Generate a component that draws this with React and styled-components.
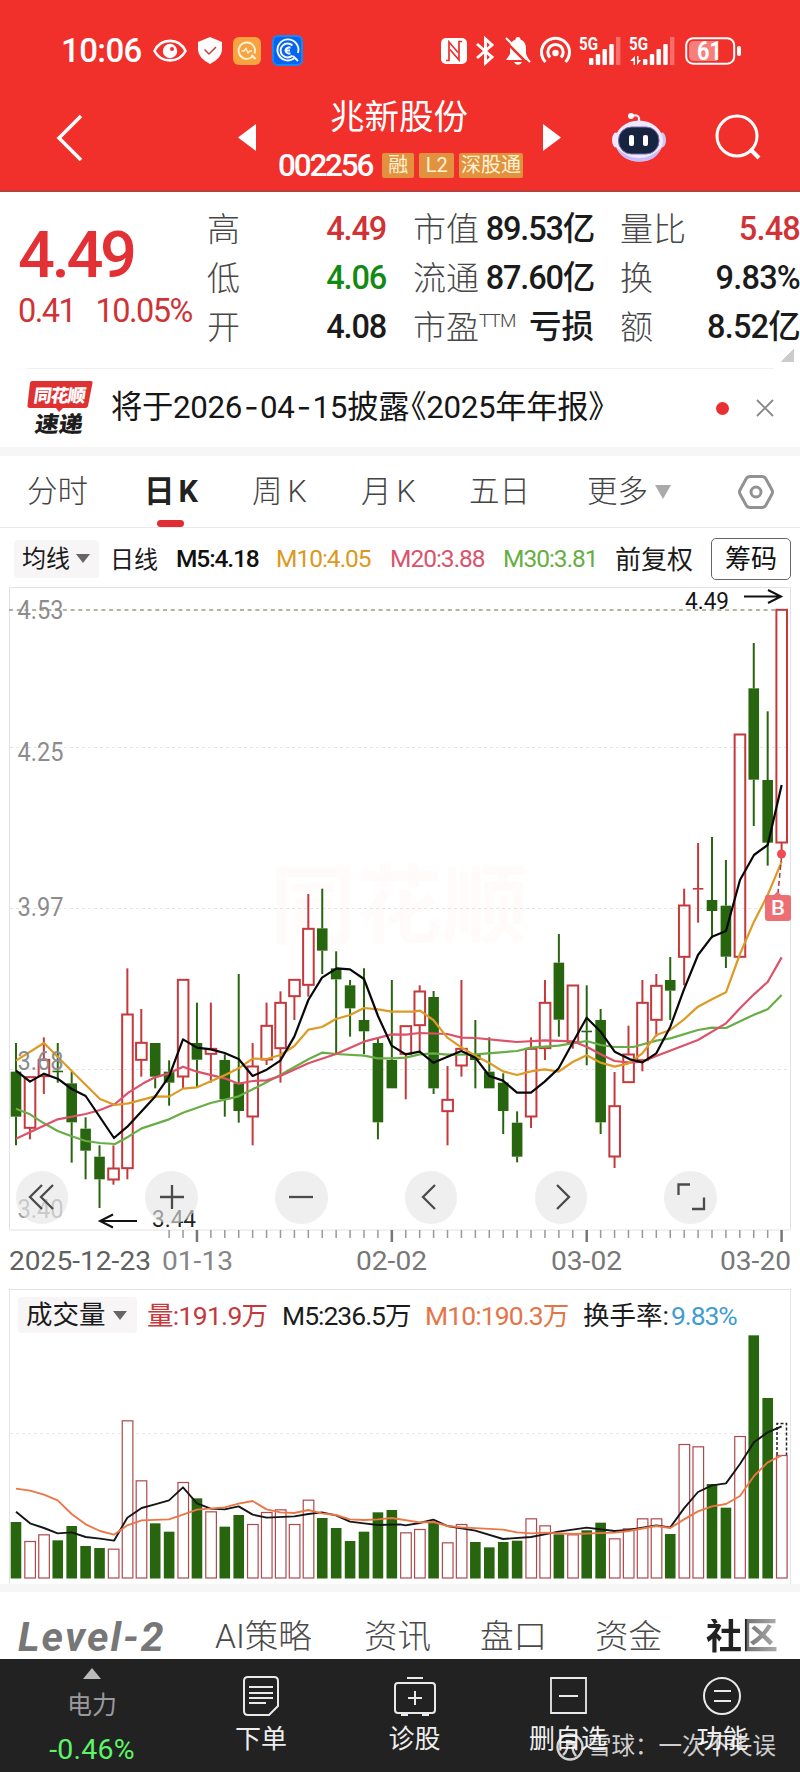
import React from "react";
import styled, { createGlobalStyle } from "styled-components";

const GlobalStyle = createGlobalStyle`
  *, *::before, *::after { box-sizing: border-box; }
  body { margin: 0; background: #fff; }
`;

const FONT = `Roboto, "Noto Sans CJK SC", sans-serif`;

const Screen = styled.div`
  width: 800px;
  height: 1772px;
  display: flex;
  flex-direction: column;
  overflow: hidden;
  background: #fff;
  color: #1b1b1b;
  font-family: ${FONT};
`;

const Text = styled.span`
  display: inline-block;
  white-space: nowrap;
  font-size: ${(p) => p.$size || 26}px;
  font-weight: ${(p) => p.$weight || 400};
  letter-spacing: ${(p) => p.$ls || 0}px;
  color: ${(p) => p.$color || "inherit"};
  margin: ${(p) => p.$mt || 0}px 0 0 ${(p) => p.$ml || 0}px;
  line-height: 1;
`;

const Icon = styled.svg`
  display: block;
  flex: none;
  overflow: visible;
`;

/* ---------- header ---------- */

const Header = styled.header`
  height: 192px;
  flex: none;
  background: #f1302b;
  border-bottom: 2px solid #b9403f;
  color: #fff;
`;

const StatusBar = styled.div`
  height: 85px;
  padding: 16px 59px 0 61px;
  display: flex;
  align-items: center;
  justify-content: space-between;
`;

const StatusGroup = styled.div`
  display: flex;
  align-items: center;
  gap: ${(p) => p.$gap}px;
`;

const NavBar = styled.div`
  height: 105px;
  display: grid;
  grid-template-columns: 238px 40px 245px 20px 69px 54px 50px 44px;
  align-items: center;
`;

const NavCell = styled.div`
  padding-left: ${(p) => p.$indent || 0}px;
`;

const StockTitle = styled.div`
  display: flex;
  flex-direction: column;
  gap: 8px;
  padding-top: 6px;
`;

const StockName = styled.div`
  height: 41px;
  display: flex;
  align-items: center;
  padding: 0 0 4px 52px;
`;

const StockCode = styled.div`
  height: 34px;
  display: flex;
  align-items: center;
`;

const Badge = styled.span`
  height: 25px;
  width: ${(p) => p.$w}px;
  margin-left: ${(p) => p.$ml || 5}px;
  border-radius: 2px;
  background: #e2923f;
  color: #fff3d6;
  display: flex;
  align-items: center;
  justify-content: center;
  font-size: 20px;
  line-height: 1;
  white-space: nowrap;
  overflow: hidden;
`;

/* ---------- quote ---------- */

const Quote = styled.section`
  height: 176px;
  flex: none;
  display: grid;
  grid-template-columns: 207px 179px 27px 181px 26px 180px;
`;

const PriceBlock = styled.div`
  padding: 34px 0 0 18px;
  color: #e33034;
`;

const Price = styled.div`
  height: 58px;
  display: flex;
  align-items: center;
`;

const Change = styled.div`
  height: 55px;
  display: flex;
  align-items: center;
  gap: 20px;
  color: #cf3336;
`;

const StatColumn = styled.div`
  padding-top: 13px;
  display: flex;
  flex-direction: column;
  grid-column: ${(p) => p.$col};
`;

const StatRow = styled.div`
  height: 49px;
  display: flex;
  align-items: center;
  justify-content: space-between;
`;

const Label = styled.span`
  font-size: 33px;
  line-height: 1;
  color: #484848;
  font-weight: 300;
  white-space: nowrap;
  display: flex;
`;

const Sup = styled.span`
  font-size: 19px;
  line-height: 19px;
  letter-spacing: -0.9px;
`;

const Corner = styled.div`
  grid-column: 6;
  justify-self: end;
  width: 13px;
  height: 13px;
  margin: -10px 6px 0 0;
  background: linear-gradient(135deg, transparent 50%, #ccc 50%);
`;

/* ---------- news ---------- */

const News = styled.section`
  height: 79px;
  flex: none;
  margin: 0 26px 0 27px;
  border-top: 1px solid #eee;
  display: flex;
  align-items: center;
`;

const Headline = styled.div`
  flex: 1;
  padding-left: 18px;
  color: #161616;
`;

const Dash = styled.span`
  font-family: Inter, sans-serif;
  letter-spacing: 1.5px;
  margin-left: 2px;
`;

const OpenQuote = styled.span`
  margin-left: -14px;
`;

const Dot = styled.span`
  width: 13px;
  height: 13px;
  border-radius: 50%;
  background: #e7302f;
  margin-right: 27px;
`;

const Band = styled.div`
  height: ${(p) => p.$h}px;
  flex: none;
  background: #f6f6f7;
`;

/* ---------- period tabs ---------- */

const Periods = styled.nav`
  height: 72px;
  flex: none;
  padding-left: 27px;
  display: grid;
  grid-template-columns: 117px 108px 109px 108px 118px 151px 36px;
  border-bottom: 1px solid #e9e9e9;
`;

const Period = styled.div`
  display: flex;
  align-items: center;
  padding-top: 1px;
  font-size: 30.5px;
  line-height: 1;
  font-weight: ${(p) => (p.$active ? 700 : 300)};
  color: ${(p) => (p.$active ? "#222" : "#444")};
  white-space: nowrap;
  gap: ${(p) => p.$gap || 0}px;
`;

const ActiveLabel = styled.span`
  align-self: stretch;
  display: flex;
  align-items: center;
  gap: 4px;
  position: relative;

  &::after {
    content: "";
    position: absolute;
    left: 13px;
    bottom: 0;
    width: 27px;
    height: 7px;
    border-radius: 4px;
    background: #e02d34;
  }
`;

const Triangle = styled.span`
  width: 0;
  height: 0;
  border: ${(p) => p.$w / 2}px solid transparent;
  border-top: ${(p) => p.$h}px solid ${(p) => p.$c || "#666"};
  border-bottom: 0;
  margin-left: ${(p) => p.$ml}px;
`;

/* ---------- indicator rows ---------- */

const IndicatorRow = styled.div`
  height: 59px;
  flex: none;
  padding: 2px 9px 0 14px;
  display: flex;
  align-items: center;
`;

const Picker = styled.div`
  width: ${(p) => p.$w}px;
  height: ${(p) => p.$h}px;
  padding-left: 8px;
  border-radius: 4px;
  background: #f7f5f6;
  display: flex;
  align-items: center;
  flex: none;
`;

const Reading = styled.div`
  width: ${(p) => p.$w}px;
  flex: none;
  display: flex;
  align-items: center;
  padding-top: 2px;
`;

const ChipsButton = styled.div`
  width: 80px;
  height: 42px;
  border: 1px solid #666;
  border-radius: 5px;
  display: flex;
  align-items: center;
  justify-content: center;
  color: #111;
`;

/* ---------- charts ---------- */

const PriceChart = styled.section`
  height: 702px;
  flex: none;
  position: relative;
`;

const Controls = styled.div`
  position: absolute;
  left: 15.5px;
  top: 584px;
  display: flex;
  gap: 77.3px;
`;

const RoundButton = styled.div`
  width: 52.5px;
  height: 52.5px;
  border-radius: 50%;
  background: rgba(229, 229, 229, 0.62);
  display: flex;
  align-items: center;
  justify-content: center;
`;

const VolumePanel = styled.section`
  height: 295px;
  flex: none;
  margin: 0 9px;
  border: 1px solid #e4e4e4;
  border-bottom: 0;
`;

const VolumeHead = styled.div`
  height: 50px;
  padding: 0 0 0 8px;
  display: flex;
  align-items: center;
`;

/* ---------- bottom ---------- */

const Sections = styled.nav`
  height: 67px;
  flex: none;
  padding: 23px 0 0 18px;
  display: grid;
  grid-template-columns: 197px 149px 116px 115px 111px 80px;
  align-items: center;
  color: #4a4a4a;
  font-size: 33.5px;
  line-height: 1;
  font-weight: 300;
  white-space: nowrap;
`;

const Level = styled.span`
  font-size: 41px;
  font-weight: 700;
  font-style: italic;
  line-height: 33px;
  letter-spacing: 2.1px;
  color: #777;
`;

const Fading = styled.span`
  font-size: 36px;
  font-weight: 700;
  color: transparent;
  background: linear-gradient(90deg, #222 0 50%, #777 52%, #bbb 100%);
  background-clip: text;
`;

const ActionBar = styled.footer`
  flex: 1;
  position: relative;
  background: #222;
  color: #eee;
  display: grid;
  grid-template-columns: 184px 154px 153px 154px 155px;
`;

const Action = styled.div`
  display: flex;
  flex-direction: column;
  align-items: center;
  padding-top: 17px;
  gap: 10px;
`;

const Sector = styled.div`
  display: flex;
  flex-direction: column;
  align-items: center;
  padding-top: 9px;
`;

const UpMark = styled.span`
  border: 9.5px solid transparent;
  border-bottom: 11px solid #bbb;
  border-top: 0;
  margin-bottom: 14px;
`;

const Watermark = styled.div`
  position: absolute;
  left: 556px;
  top: 74px;
  display: flex;
  align-items: center;
  gap: 4px;
  color: rgba(255, 255, 255, 0.78);
`;

/* ---------- chart data ---------- */

// [rising, high, body top, body bottom, low] in thirds of a pixel
const CANDLES = [
  [0, 549, 635, 770, 856], [1, 650, 650, 805, 838], [1, 532, 598, 650, 702], [0, 549, 632, 636, 668],
  [0, 636, 670, 787, 908], [0, 772, 806, 872, 958], [0, 856, 890, 958, 1044], [1, 856, 924, 960, 974],
  [1, 325, 462, 926, 958], [1, 447, 547, 601, 650], [0, 549, 549, 650, 685], [0, 601, 635, 668, 737],
  [1, 358, 358, 651, 685], [0, 428, 549, 599, 683], [1, 428, 565, 583, 668], [0, 583, 600, 718, 770],
  [0, 342, 670, 753, 788], [1, 549, 618, 771, 856], [1, 428, 496, 600, 615], [1, 394, 427, 566, 668],
  [1, 358, 358, 410, 480], [1, 102, 205, 376, 410], [0, 86, 205, 272, 342], [0, 274, 325, 358, 580],
  [0, 360, 376, 445, 530], [0, 325, 480, 514, 583], [0, 534, 549, 787, 838], [0, 360, 600, 685, 685],
  [1, 497, 497, 583, 718], [1, 376, 393, 497, 575], [0, 393, 411, 685, 702], [1, 618, 718, 755, 856],
  [1, 360, 565, 618, 650], [0, 480, 585, 600, 685], [0, 532, 635, 685, 685], [0, 640, 668, 753, 822],
  [0, 754, 788, 890, 907], [1, 532, 565, 771, 804], [1, 360, 427, 566, 600], [0, 222, 308, 479, 530],
  [1, 375, 375, 548, 566], [0, 376, 512, 516, 616], [0, 447, 480, 787, 822], [1, 636, 737, 891, 924],
  [1, 497, 582, 668, 668], [1, 360, 427, 602, 634], [1, 342, 376, 481, 530], [0, 291, 360, 392, 480],
  [1, 86, 135, 292, 376], [1, -51, 84, 88, 188], [0, -69, 120, 153, 235], [0, 0, 137, 290, 324],
  [1, -378, -378, 292, 292], [0, -651, -515, -241, -102], [0, -446, -240, -52, 17], [1, -752, -752, -51, -20],
];

const VOLUMES = [
  726, 783, 763, 781, 738, 798, 804, 806, 421, 601, 730, 755, 606, 655, 694, 740, 705, 732, 696, 688, 732, 659,
  714, 744, 783, 755, 697, 690, 757, 747, 727, 787, 732, 786, 802, 786, 782, 715, 736, 763, 763, 751, 728, 775,
  745, 715, 715, 762, 492, 499, 612, 683, 468, 166, 354, 525,
];

const MA = {
  m5: "48,632 90,665 132,641 173,656 215,687 257,708 342,834 382,800 465,710 507,650 549,538 591,563 632,568 674,579 716,597 758,648 800,629 841,602 883,530 925,420 966,353 1010,325 1050,328 1092,357 1134,468 1175,557 1217,583 1259,575 1300,608 1384,573 1426,593 1468,648 1509,662 1551,698 1593,698 1634,665 1676,625 1718,548 1760,473 1802,515 1844,575 1890,598 1927,607 1969,580 2011,500 2052,388 2094,285 2136,230 2178,213 2220,60 2262,-15 2303,-45 2345,-225",
  m10: "48,602 132,549 215,633 300,717 345,735 385,730 465,709 507,710 549,686 591,682 674,646 716,625 758,596 800,597 841,585 883,558 925,509 966,501 1008,477 1050,465 1092,444 1134,448 1175,455 1240,455 1260,452 1300,480 1342,533 1384,562 1426,587 1468,609 1509,634 1551,645 1593,634 1634,628 1676,635 1718,606 1760,586 1802,608 1844,620 1886,610 1927,580 1969,525 2011,510 2052,478 2094,440 2136,418 2178,397 2220,282 2262,185 2303,105 2345,5",
  m20: "48,836 173,778 257,762 300,750 345,732 385,698 430,670 465,652 507,640 549,620 591,635 674,655 716,671 758,663 800,661 841,648 925,610 1008,582 1092,545 1175,523 1217,524 1259,519 1342,522 1384,533 1426,534 1551,546 1634,541 1718,544 1760,560 1802,583 1844,603 1890,608 1927,605 1969,588 2094,540 2178,490 2220,445 2262,403 2303,366 2345,292",
  m30: "48,746 90,763 132,790 173,813 215,829 257,843 300,849 345,852 385,830 425,805 507,778 549,758 632,729 716,709 758,688 841,645 925,598 966,578 1008,582 1092,587 1134,595 1175,595 1217,593 1259,583 1300,580 1342,584 1426,583 1551,573 1593,563 1676,557 1760,543 1802,555 1844,561 1900,561 1969,542 2011,535 2094,510 2136,503 2178,504 2262,464 2303,448 2345,405",
};

const VOLUME_MA = {
  m5: "48,695 90,730 132,744 173,760 215,757 257,771 300,776 342,782 382,713 425,684 465,673 507,661 549,622 591,670 632,686 674,688 716,679 758,704 800,713 883,709 925,702 966,697 1008,706 1050,725 1092,730 1134,735 1200,733 1217,736 1259,729 1300,719 1342,738 1426,752 1509,777 1593,771 1634,763 1676,755 1760,743 1844,753 1886,750 1969,736 2011,742 2052,685 2094,636 2136,616 2178,610 2220,552 2262,487 2303,457 2345,439",
  m10: "48,626 90,632 132,644 173,661 215,702 257,733 300,753 342,764 382,736 425,721 507,718 549,704 591,689 674,682 716,671 758,663 800,688 841,697 883,699 925,690 966,700 1008,705 1050,718 1092,720 1134,718 1175,714 1259,727 1300,726 1342,738 1384,742 1509,749 1551,757 1593,760 1634,758 1718,762 1844,758 1886,753 1969,738 2011,744 2052,718 2094,694 2136,679 2178,672 2220,648 2262,588 2303,547 2345,526",
};

const RED = "#c5393c";
const GREEN = "#28650f";
const candleX = (i) => 16 + i * 13.92;

function Line({ points, color, width = 2.2 }) {
  return <polyline points={points} fill="none" stroke={color} strokeWidth={width * 3} strokeLinejoin="round" />;
}

function Candles() {
  return CANDLES.map(([up, high, top, bottom, low], i) => {
    const x = candleX(i);
    const y = (v) => 273 + v / 3;
    const color = up ? RED : GREEN;
    return (
      <g key={i} stroke={color} strokeWidth="2">
        {high < top && <line x1={x} x2={x} y1={y(high)} y2={y(top)} />}
        {low > bottom && <line x1={x} x2={x} y1={y(bottom)} y2={y(low)} />}
        {up && bottom - top > 6 ? (
          <rect x={x - 5.2} y={y(top) + 0.5} width="10.6" height={(bottom - top) / 3 - 1} fill="none" />
        ) : (
          <rect x={x - 5.3} y={y(top)} width="10.6" height={Math.max((bottom - top) / 3, 1.6)} fill={color} stroke="none" />
        )}
      </g>
    );
  });
}

function AxisText({ x, y, w, children, color = "#8c8c8c", size = 26, weight = 400 }) {
  return (
    <text x={x} y={y} textLength={w} lengthAdjust="spacingAndGlyphs" fill={color} fontSize={size} fontWeight={weight} fontFamily="Roboto, sans-serif">
      {children}
    </text>
  );
}

function PriceDrawing() {
  return (
    <Icon width="800" height="702" viewBox="0 0 800 702">
      <path d="M9.5 643V.5H790.5V643Z" fill="none" stroke="#e2e2e2" />
      <text x="270" y="350" fontSize="86" fontWeight="700" fill="#fffbfb" fontFamily='"Noto Sans CJK SC", sans-serif'>同花顺</text>
      {[160.5, 321.5, 482.5].map((y) => (
        <line key={y} x1="10" x2="790" y1={y} y2={y} stroke="#e4e4e4" strokeDasharray="3 3" />
      ))}
      <line x1="9" x2="776" y1="23" y2="23" stroke="#9a9c82" strokeWidth="1.4" strokeDasharray="4 3.7" />
      <Candles />
      <g transform="translate(0 273) scale(.33333)">
        <Line points={MA.m30} color="#68ad45" />
        <Line points={MA.m20} color="#dd5269" />
        <Line points={MA.m10} color="#dd9a25" />
        <Line points={MA.m5} color="#080808" />
      </g>
      <AxisText x="17.5" y="32" w="46">4.53</AxisText>
      <AxisText x="17.5" y="174" w="46">4.25</AxisText>
      <AxisText x="17.5" y="329" w="46">3.97</AxisText>
      <AxisText x="17.5" y="483" w="46">3.68</AxisText>
      <AxisText x="17.5" y="631" w="46" color="#9c9c9c">3.40</AxisText>
      <AxisText x="685" y="22" w="44" color="#151515" size="23">4.49</AxisText>
      <path d="M744 9.5H781M768 3L781 9.5L768 16" fill="none" stroke="#111" strokeWidth="2" />
      <AxisText x="152" y="640" w="44" color="#222" size="23">3.44</AxisText>
      <path d="M137 634H100M113 627.5L100 634L113 640.5" fill="none" stroke="#111" strokeWidth="2" />
      <path d="M781.5 270L778 306" stroke="#a43c3c" strokeWidth="1.5" strokeDasharray="5 3" />
      <circle cx="781.5" cy="267" r="4.5" fill="#ef4b50" />
      <path d="M767 308H774L777.5 304L781 308H788Q791 308 791 311V331Q791 334 788 334H768Q765 334 765 331V311Q765 308 767 308Z" fill="#ec6469" fillOpacity=".93" />
      <AxisText x="771" y="328" w="14" color="#fff" size="20" weight="500">B</AxisText>
      {CANDLES.map((_, i) => {
        const major = i === 13 || i === 27 || i === 41 || i === 55;
        if (i < 11) return null;
        return <line key={i} x1={candleX(i)} x2={candleX(i)} y1="643" y2={major ? 655 : 651} stroke={major ? "#777" : "#999"} strokeWidth={major ? 2.5 : 1.5} />;
      })}
      <AxisText x="9" y="683" w="142" color="#606060" size="25.5">2025-12-23</AxisText>
      <AxisText x="162" y="683" w="71" color="#858585" size="25.5">01-13</AxisText>
      <AxisText x="356" y="683" w="71" color="#777" size="25.5">02-02</AxisText>
      <AxisText x="551" y="683" w="71" color="#777" size="25.5">03-02</AxisText>
      <AxisText x="720" y="683" w="71" color="#777" size="25.5">03-20</AxisText>
    </Icon>
  );
}

function VolumeDrawing() {
  return (
    <Icon width="780" height="244" viewBox="10 60 780 244">
      <line x1="10" x2="790" y1="153.5" y2="153.5" stroke="#e8e8e8" strokeDasharray="3 3" />
      {VOLUMES.map((v, i) => {
        const x = candleX(i);
        const top = v / 3;
        return CANDLES[i][0] ? (
          <rect key={i} x={x - 5.1} y={top + 0.5} width="10.6" height={298 - top - 0.5} fill="#fff" stroke="#ae494d" strokeWidth="1.2" />
        ) : (
          <rect key={i} x={x - 5.3} y={top} width="10.6" height={298.5 - top} fill={GREEN} />
        );
      })}
      <path d="M777 175V143.5H786.5V175" fill="none" stroke="#222" strokeWidth="1.5" strokeDasharray="3 2" />
      <g transform="scale(.33333)">
        <Line points={VOLUME_MA.m5} color="#161616" width={1.9} />
        <Line points={VOLUME_MA.m10} color="#ec7746" width={1.9} />
      </g>
    </Icon>
  );
}

/* ---------- icons ---------- */

const Eye = () => (
  <Icon width="34" height="24" viewBox="0 0 34 24" fill="none" stroke="#fff" strokeWidth="2.6">
    <path d="M1.5 12C8-1.5 26-1.5 32.5 12C26 24.5 8 24.5 1.5 12Z" />
    <circle cx="17" cy="12" r="7.2" fill="#fff" stroke="none" />
    <circle cx="19" cy="10" r="2" fill="#ef302b" stroke="none" />
  </Icon>
);
const Shield = () => (
  <Icon width="24" height="27" viewBox="0 0 24 27">
    <path d="M12 0L24 5V13Q23.5 21 12 27Q.5 21 0 13V5Z" fill="#fff" />
    <path d="M6.5 12.5L11 17L18 10" fill="none" stroke="#c7413c" strokeWidth="1.5" />
  </Icon>
);
const OrangeApp = () => (
  <Icon width="28" height="28" viewBox="0 0 28 28">
    <rect width="28" height="28" rx="6" fill="#f7a33f" />
    <path d="M19 20A8.2 8.2 0 1 1 21.5 16.5M18.5 18L22.5 22" fill="none" stroke="#fff2d8" strokeWidth="1.9" />
    <path d="M8.5 14H11L13 11.5L15 16L17 14H19" fill="none" stroke="#fff2d8" strokeWidth="1.4" />
  </Icon>
);
const BlueApp = () => (
  <Icon width="31" height="31" viewBox="0 0 31 31">
    <rect width="31" height="31" rx="6" fill="#1687f5" />
    <rect x="2" y="2" width="27" height="27" rx="4" fill="#0764ee" />
    <path d="M22 23.5A10.5 10.5 0 1 1 26 18M21 21L26 26M20.5 10.5A7 7 0 1 0 20.5 20.5M18.5 12.5H16.5Q13.5 13.5 13.5 15.5T16.5 18.5H18.5M14 15.5H18" fill="none" stroke="#f3f8ff" strokeWidth="1.9" />
  </Icon>
);
const Nfc = () => (
  <Icon width="26" height="26" viewBox="0 0 26 26">
    <rect width="26" height="26" rx="5" fill="#fff" />
    <path d="M5 22.5H8V4L17 14.5" fill="none" stroke="#ec302b" strokeWidth="1.7" />
    <path d="M21 3.500H18V22L9 11.500" fill="none" stroke="#ec302b" strokeWidth="1.7" />
  </Icon>
);
const Bluetooth = () => (
  <Icon width="19" height="28" viewBox="0 0 19 28" fill="none" stroke="#fff" strokeWidth="2.9">
    <path d="M1 7L16 20L9.5 26V2L16 8L1 21" />
  </Icon>
);
const Bell = () => (
  <Icon width="27" height="28" viewBox="0 0 27 28">
    <path d="M14 0Q16.5 0 16.5 2.5Q22 4.5 22 12V17L25 23H2L6 17V11Q6 4.5 11.5 2.5Q11.5 0 14 0ZM10 25H18Q16.5 28 14 28T10 25Z" fill="#fff" />
    <path d="M0 3L24 27" stroke="#ef302b" strokeWidth="2.5" />
    <path d="M2 1L26 25" stroke="#fff" strokeWidth="2.2" />
  </Icon>
);
const Hotspot = () => (
  <Icon width="31" height="27" viewBox="0 0 31 27" fill="none" stroke="#fff" strokeWidth="3">
    <path d="M5.5 25A14 14 0 1 1 25.5 25M10 20.5A7.7 7.7 0 1 1 21 20.5" />
    <circle cx="15.5" cy="16" r="3.2" fill="#fff" stroke="none" />
  </Icon>
);
const Signal = ({ data }) => (
  <Icon width={data ? 46 : 41} height="28" viewBox={`0 0 ${data ? 46 : 41} 28`}>
    <text x="-1" y="13" fontFamily="Roboto, sans-serif" fontWeight="700" fontSize="18.5" fill="#fff" textLength="19" lengthAdjust="spacingAndGlyphs">5G</text>
    <g transform={`translate(${data ? 13 : 9} 0)`} fill="#fff">
      <rect y={data ? 22 : 21} width="4.4" height={data ? 6 : 7} rx="1" />
      <rect x="6.8" y="17" width="4.4" height="11" rx="1" />
      <rect x="13.5" y="12" width="4.4" height="16" rx="1" />
      <rect x="20.3" y="7" width="4.4" height="21" rx="1" />
      <rect x="27" width="4.4" height="28" fillOpacity=".3" />
    </g>
    {data && <path d="M0 24L5 19V28H3.5V24ZM11 23L7 28V19H8.5V23Z" fill="#fff" />}
  </Icon>
);
const Battery = () => (
  <Icon width="56" height="28" viewBox="0 0 56 28">
    <rect x="1.2" y="1.2" width="48" height="25.5" rx="7" fill="none" stroke="#fff" strokeWidth="2" />
    <path d="M9 4H32V24H9Q4 24 4 19V9Q4 4 9 4Z" fill="#fff" fillOpacity=".38" />
    <rect x="52" y="9" width="4" height="10" rx="2" fill="#fff" />
    <text x="12" y="23" fontFamily="Roboto, sans-serif" fontWeight="700" fontSize="25" textLength="25" lengthAdjust="spacingAndGlyphs" fill="#fff">61</text>
  </Icon>
);
const Robot = () => (
  <Icon width="54" height="50" viewBox="0 0 54 50">
    <path d="M27 9V5Q26 1 20 3" fill="none" stroke="#f6e9fa" strokeWidth="2.2" />
    <circle cx="19" cy="3" r="3" fill="#fff" />
    <ellipse cx="4" cy="27" rx="4" ry="7.5" fill="#f2e7ff" />
    <ellipse cx="50" cy="27" rx="4" ry="7.5" fill="#cfc4fb" />
    <ellipse cx="27" cy="28" rx="24" ry="20.5" fill="#eee9ff" />
    <path d="M5 35Q10 48 27 48.5T49 35Q39 45 27 45T5 35Z" fill="#c8bdf9" />
    <rect x="6.5" y="14" width="40.5" height="27" rx="13" fill="#17243f" stroke="#796dac" />
    <rect x="17" y="22" width="5" height="11" rx="2" fill="#fff" />
    <rect x="31" y="22" width="5" height="11" rx="2" fill="#fff" />
  </Icon>
);
const Express = () => (
  <Icon width="66" height="54" viewBox="0 0 66 54">
    <path d="M5 0H64Q66 0 65.5 2L61 25Q60.5 27 58 27H36L32 31L29 27H3Q0 27 .5 24L3 2Q3.5 0 5 0Z" fill="#df3032" />
    <g fontFamily='"Noto Sans CJK SC", sans-serif' fontWeight="900">
      <text transform="translate(6 21) skewX(-8)" fontSize="18" textLength="52" fill="#fff">同花顺</text>
      <text transform="translate(7 51) skewX(-8)" fontSize="22" textLength="48" lengthAdjust="spacingAndGlyphs" fill="#1d1d1d">速递</text>
    </g>
  </Icon>
);
const Cog = () => (
  <Icon width="36" height="34" viewBox="0 0 36 34" fill="none" stroke="#929292" strokeWidth="3">
    <path d="M12 1.5H24Q26.5 1.5 28 4L34 15Q35 17 34 19L28 30Q26.5 32.5 24 32.5H12Q9.5 32.5 8 30L2 19Q1 17 2 15L8 4Q9.5 1.5 12 1.5Z" />
    <circle cx="18" cy="17" r="5" />
  </Icon>
);

const CONTROL_PATHS = [
  "M14 2L2 14L14 26M25 2L13 14L25 26",
  "M2 14H26M14 2V26",
  "M2 14H26",
  "M18 2L6 14L18 26",
  "M10 2L22 14L10 26",
  "M1.5 12V1.5H13M27 14.5V26H15",
];

const STATS = [
  { col: 2, rows: [["高", "4.49", "#cf3336"], ["低", "4.06", "#138a13"], ["开", "4.08"]] },
  { col: 4, rows: [["市值", "89.53亿"], ["流通", "87.60亿"], ["市盈", "亏损", null, "TTM"]] },
  { col: 6, ls: -0.8, rows: [["量比", "5.48", "#cf3336"], ["换", "9.83%"], ["额", "8.52亿"]] },
];

const ACTIONS = [
  { label: "下单", icon: <path d="M5 1H31Q35 1 35 5V30L26 39H5Q1 39 1 35V5Q1 1 5 1ZM6 11H30M6 17H30M6 22H30M6 27H23" /> },
  { label: "诊股", icon: <path d="M13 2H29M4 7H38Q41 7 41 10V34Q41 37 38 37H4Q1 37 1 34V10Q1 7 4 7ZM14 22H28M21 15V29M7 39H14M28 39H35" />, w: 42 },
  { label: "删自选", icon: <path d="M1 2H36V37H1ZM9 20H28" strokeWidth="1.8" /> },
  { label: "功能", icon: <><circle cx="18" cy="20" r="18" /><path d="M10 15H27M10 25H27" /></> },
];

export default function App() {
  return (
    <Screen>
      <GlobalStyle />
      <Header>
        <StatusBar>
          <StatusGroup $gap={11}>
            <Text $size={33} $weight={500} $ls={-0.6}>10:06</Text>
            <Eye />
            <Shield />
            <OrangeApp />
            <BlueApp />
          </StatusGroup>
          <StatusGroup $gap={9}>
            <Nfc />
            <Bluetooth />
            <Bell />
            <Hotspot />
            <Signal />
            <Signal data />
            <Battery />
          </StatusGroup>
        </StatusBar>
        <NavBar>
          <NavCell $indent={56}>
            <Icon width="27" height="48" viewBox="0 0 27 48"><path d="M25 2L3 24L25 46" fill="none" stroke="#fff" strokeWidth="3.5" /></Icon>
          </NavCell>
          <Icon width="18" height="27" viewBox="0 0 18 27"><path d="M18 0V27L0 13.5Z" fill="#fff" /></Icon>
          <StockTitle>
            <StockName><Text $size={34.5}>兆新股份</Text></StockName>
            <StockCode>
              <Text $size={31.5} $weight={500} $ls={-2.2} $mt={2}>002256</Text>
              <Badge $w={32} $ml={10}>融</Badge>
              <Badge $w={35}>L2</Badge>
              <Badge $w={64}>深股通</Badge>
            </StockCode>
          </StockTitle>
          <NavCell $indent={20}>
            <Icon width="18" height="27" viewBox="0 0 18 27"><path d="M0 0V27L18 13.5Z" fill="#fff" /></Icon>
          </NavCell>
          <span />
          <NavCell><Robot /></NavCell>
          <span />
          <Icon width="45" height="45" viewBox="0 0 45 45" fill="none" stroke="#fff" strokeWidth="3">
            <circle cx="21" cy="21" r="20" />
            <path d="M34 34L43 43" strokeWidth="4" />
          </Icon>
        </NavBar>
      </Header>

      <Quote>
        <PriceBlock>
          <Price><Text $size={65} $weight={500} $ls={-3.3}>4.49</Text></Price>
          <Change>
            <Text $size={32.5} $ls={-1.5}>0.41</Text>
            <Text $size={32.5} $ls={-1.5}>10.05%</Text>
          </Change>
        </PriceBlock>
        {STATS.map((s) => (
          <StatColumn key={s.col} $col={s.col}>
            {s.rows.map(([label, value, color, sup]) => (
              <StatRow key={label}>
                <Label>{label}{sup && <Sup>{sup}</Sup>}</Label>
                <Text $size={32.5} $weight={500} $ls={sup ? 0 : s.ls || -1.2} $color={color}>{value}</Text>
              </StatRow>
            ))}
          </StatColumn>
        ))}
        <Corner />
      </Quote>

      <News>
        <Express />
        <Headline>
          <Text $size={31.3} $ls={-0.3}>
            将于2026<Dash>-</Dash>04<Dash>-</Dash>15披露<OpenQuote>《</OpenQuote>2025年年报》
          </Text>
        </Headline>
        <Dot />
        <Icon width="18" height="18" viewBox="0 0 18 18" stroke="#888" strokeWidth="1.8"><path d="M1 1L17 17M17 1L1 17" /></Icon>
      </News>
      <Band $h={9} />

      <Periods>
        <Period>分时</Period>
        <Period $active><ActiveLabel><span>日</span><span>K</span></ActiveLabel></Period>
        <Period $gap={5}><span>周</span><span>K</span></Period>
        <Period $gap={5}><span>月</span><span>K</span></Period>
        <Period>五日</Period>
        <Period>更多<Triangle $w={16} $h={14} $ml={7} $c="#aaa" /></Period>
        <Period><Cog /></Period>
      </Periods>

      <IndicatorRow>
        <Picker $w={85} $h={38}><Text $size={24}>均线</Text><Triangle $w={14} $h={9} $ml={6} /></Picker>
        <Reading $w={77}><Text $size={24} $ml={11}>日线</Text></Reading>
        <Reading $w={100}><Text $size={24.5} $weight={500} $ls={-1.1} $color="#111">M5:4.18</Text></Reading>
        <Reading $w={114}><Text $size={24.5} $ls={-1} $color="#dc991f">M10:4.05</Text></Reading>
        <Reading $w={113}><Text $size={24.5} $ls={-1} $color="#d9536c">M20:3.88</Text></Reading>
        <Reading $w={112}><Text $size={24.5} $ls={-1} $color="#67ae42">M30:3.81</Text></Reading>
        <Reading $w={96}><Text $size={26}>前复权</Text></Reading>
        <ChipsButton><Text $size={26}>筹码</Text></ChipsButton>
      </IndicatorRow>

      <PriceChart>
        <PriceDrawing />
        <Controls>
          {CONTROL_PATHS.map((d) => (
            <RoundButton key={d}>
              <Icon width="28" height="28" viewBox="0 0 28 28"><path d={d} fill="none" stroke="#4b4b4b" strokeWidth="2.3" /></Icon>
            </RoundButton>
          ))}
        </Controls>
      </PriceChart>

      <VolumePanel>
        <VolumeHead>
          <Picker $w={119} $h={36}><Text $size={26.5}>成交量</Text><Triangle $w={14} $h={9} $ml={7} /></Picker>
          <Reading $w={145}><Text $size={26.5} $ls={-0.7} $color="#c5393c" $ml={10}>量:191.9万</Text></Reading>
          <Reading $w={143}><Text $size={26.5} $ls={-1}>M5:236.5万</Text></Reading>
          <Reading $w={158}><Text $size={26.5} $ls={-0.9} $color="#e57547">M10:190.3万</Text></Reading>
          <Reading $w={88}><Text $size={26.5}>换手率:</Text></Reading>
          <Reading><Text $size={26.5} $ls={-1.1} $color="#429ccf">9.83%</Text></Reading>
        </VolumeHead>
        <VolumeDrawing />
      </VolumePanel>
      <Band $h={8} />

      <Sections>
        <Level>Level-2</Level>
        <span>AI策略</span>
        <span>资讯</span>
        <span>盘口</span>
        <span>资金</span>
        <Fading>社区</Fading>
      </Sections>

      <ActionBar>
        <Sector>
          <UpMark />
          <Text $size={25} $color="#99999f">电力</Text>
          <Text $size={28.5} $ls={0.2} $color="#5df567" $mt={18}>-0.46%</Text>
        </Sector>
        {ACTIONS.map((a) => (
          <Action key={a.label}>
            <Icon width={a.w || 37} height="40" viewBox={`0 0 ${a.w || 37} 40`} fill="none" stroke="#e9e9e9" strokeWidth="2">{a.icon}</Icon>
            <Text $size={26}>{a.label}</Text>
          </Action>
        ))}
        <Watermark>
          <Icon width="28" height="28" viewBox="0 0 28 28" fill="none" stroke="rgba(255,255,255,.8)" strokeWidth="2.4">
            <circle cx="14" cy="14" r="12.5" />
            <path d="M7 22Q13 17 11 8Q18 7 19 13Q14 15 20 23M10 13Q14 9 18 12" />
          </Icon>
          <Text $size={23.5}>雪球：一次不失误</Text>
        </Watermark>
      </ActionBar>
    </Screen>
  );
}
